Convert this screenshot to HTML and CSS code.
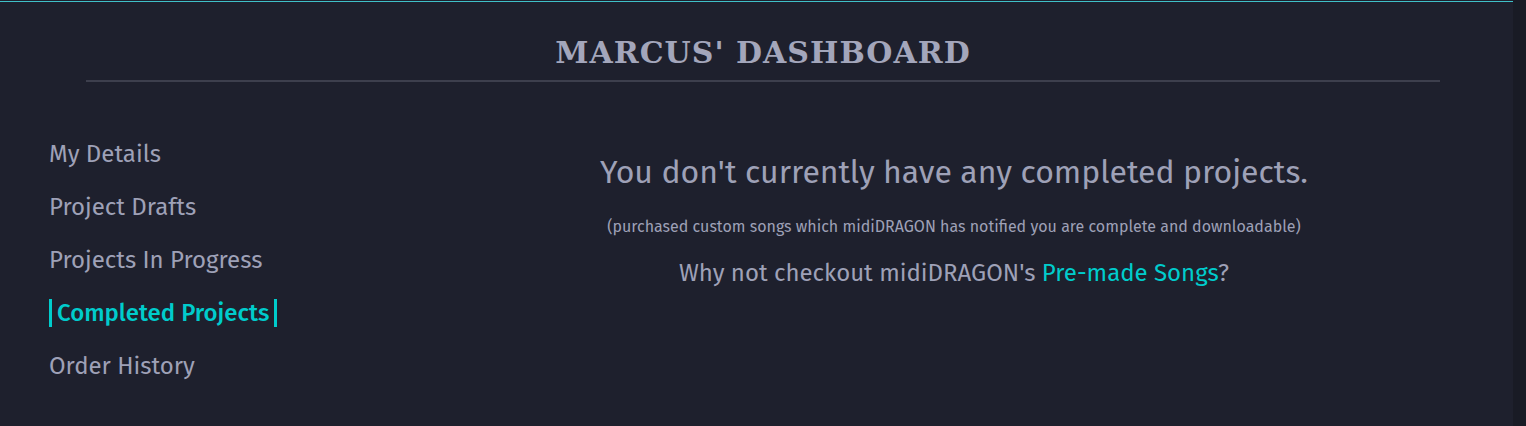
FILE: index.html
```html
<!DOCTYPE html>
<html lang="en">
<head>
<meta charset="utf-8">
<title>Marcus' Dashboard</title>
<link rel="stylesheet" href="styles.css">
</head>
<body>
<div class="topline"></div>
<header class="header">
  <h1 class="title">MARCUS' DASHBOARD</h1>
  <div class="rule"></div>
</header>
<div class="content">
  <nav class="sidebar">
    <a class="nav-item" href="#">My Details</a>
    <a class="nav-item" href="#">Project Drafts</a>
    <a class="nav-item" href="#">Projects In Progress</a>
    <a class="nav-item active" href="#">Completed Projects</a>
    <a class="nav-item" href="#">Order History</a>
  </nav>
  <main class="main">
    <h2 class="empty-title">You don't currently have any completed projects.</h2>
    <p class="empty-note">(purchased custom songs which midiDRAGON has notified you are complete and downloadable)</p>
    <p class="empty-cta">Why not checkout midiDRAGON's <a class="link" href="#">Pre-made Songs</a>?</p>
  </main>
</div>
<div class="scroll-gutter"></div>
</body>
</html>
```

FILE: styles.css
```css
html, body {
  margin: 0;
  padding: 0;
}
body {
  background: #1e202d;
  color: #9ea1b7;
  font-family: "Fira Sans", "Open Sans", sans-serif;
  height: 426px;
  overflow: hidden;
}
.topline {
  margin-top: 1px;
  height: 1px;
  background: #3fc0c8;
}
.header {
  padding: 0 86px;
}
.title {
  margin: 33px 0 0;
  font-family: "DejaVu Serif", serif;
  font-weight: bold;
  font-size: 30px;
  line-height: 36px;
  text-align: center;
  color: #a3a6bb;
  letter-spacing: 1px;
}
.rule {
  margin-top: 9px;
  height: 2px;
  background: #3d3f4d;
}
.content {
  display: flex;
}
.sidebar {
  width: 333px;
  padding-left: 49px;
  padding-top: 58px;
  display: flex;
  flex-direction: column;
  align-items: flex-start;
  gap: 25px;
}
.nav-item {
  display: block;
  font-size: 24px;
  line-height: 28px;
  height: 28px;
  color: #9ea1b7;
  text-decoration: none;
}
.nav-item.active {
  padding: 0 5px;
  border-left: 3px solid #00cccc;
  border-right: 3px solid #00cccc;
  color: #00cccc;
  font-weight: 500;
}
.main {
  flex: 1;
  text-align: center;
  padding-top: 71px;
}
.empty-title {
  margin: 0;
  font-weight: normal;
  font-size: 32px;
  line-height: 38px;
}
.empty-note {
  margin: 26px 0 0;
  font-size: 16px;
  line-height: 20px;
}
.empty-cta {
  margin: 22px 0 0;
  font-size: 24px;
  line-height: 28px;
}
.link {
  color: #00cccc;
  text-decoration: none;
}
.scroll-gutter {
  position: fixed;
  top: 0;
  right: 0;
  width: 13px;
  height: 100%;
  background: #191b25;
}
```
